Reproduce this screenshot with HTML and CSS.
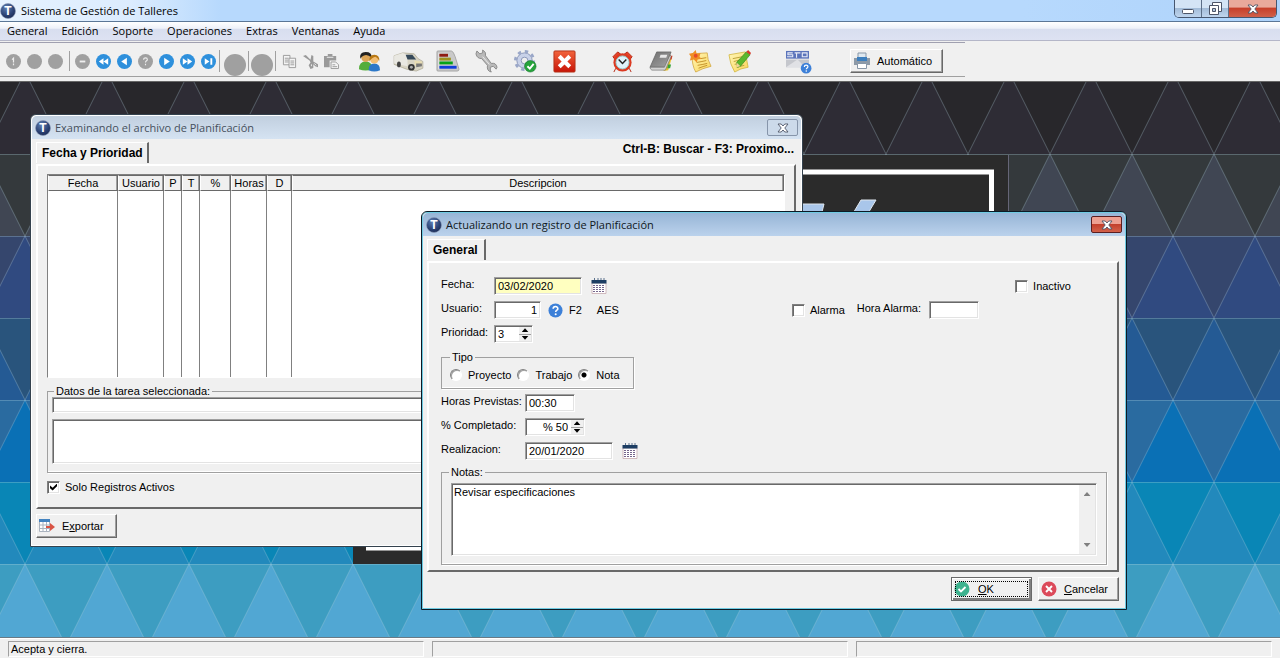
FILE: index.html
```html
<!DOCTYPE html>
<html lang="es">
<head>
<meta charset="utf-8">
<title>Sistema de Gestión de Talleres</title>
<link rel="stylesheet" href="styles.css">
</head>
<body>
<svg class="defs" width="0" height="0" aria-hidden="true">
  <defs>
    <radialGradient id="navy" cx=".4" cy=".3" r=".8"><stop offset="0" stop-color="#5f80b4"/><stop offset=".6" stop-color="#2b4274"/><stop offset="1" stop-color="#18264c"/></radialGradient>
    <linearGradient id="note" x2="1" y2="1"><stop offset="0" stop-color="#fff6b8"/><stop offset="1" stop-color="#fbd558"/></linearGradient>
    <linearGradient id="red" x2="0" y2="1"><stop offset="0" stop-color="#f2643c"/><stop offset="1" stop-color="#c81408"/></linearGradient>
    <linearGradient id="book" x2="1" y2="1"><stop offset="0" stop-color="#6e6e6e"/><stop offset="1" stop-color="#a4a4a4"/></linearGradient>
    <symbol id="logo" viewBox="0 0 16 16"><circle cx="8" cy="8" r="7.5" fill="url(#navy)" stroke="#8d9cb8" stroke-width=".6"/><text x="8" y="12.4" text-anchor="middle" class="logo-letter">T</text></symbol>
    <symbol id="cross" viewBox="0 0 12 10"><path d="M1 1h3.200L6 3l1.800-2H11L7.800 5 11 9H7.800L6 7 4.200 9H1l3.200-4z" fill="#fff" stroke="#4d5568" stroke-width=".9"/></symbol>
    <symbol id="calendar" viewBox="0 0 16 16"><path d="M1 5h14v10.500H1z" fill="#fff" stroke="#c7a9ae" stroke-width=".8"/><path d="M.5 2h15v3.500H.5z" fill="#1d3d63"/><path d="M3.500 0v2M7 0v2M10 0v2M13 0v2" stroke="#5d738e"/><path d="M2 7.500h12M2 9.500h12M2 11.500h12M2 13.500h12" stroke="#75658c" stroke-dasharray="2 1"/></symbol>
    <symbol id="help" viewBox="0 0 16 16"><circle cx="8" cy="8" r="7.500" fill="#3d80d8"/><path d="M5.500 6.200C5.500 3 10.500 3 10.500 6c0 1.700-2.300 1.700-2.300 3.600" fill="none" stroke="#fff" stroke-width="1.700"/><circle cx="8.200" cy="12" r="1.100" fill="#fff"/></symbol>
    <symbol id="nav" viewBox="0 0 16 16"><circle cx="8" cy="8" r="8" fill="#2e90dc"/></symbol>
    <symbol id="off" viewBox="0 0 16 16"><circle cx="8" cy="8" r="8" fill="#a0a0a0"/></symbol>
  </defs>
</svg>

<header class="titlebar">
  <svg class="logo"><use href="#logo"/></svg>
  <h1 class="app-title">Sistema de Gestión de Talleres</h1>
  <div class="caption">
    <button class="cap" aria-label="Minimizar"><svg width="14" height="10"><rect x="1.500" y="5.500" width="11" height="4" rx="1" fill="#fff" stroke="#4d5568"/></svg></button>
    <button class="cap" aria-label="Restaurar"><svg width="13" height="13"><path d="M3.500.500h9v9h-9z" fill="#fff" stroke="#4d5568"/><path d="M.500 3.500h9v9h-9z" fill="#fff" stroke="#4d5568"/><path d="M3.500 6.500h3v3h-3z" fill="#b4c8df" stroke="#4d5568"/></svg></button>
    <button class="cap cap-close" aria-label="Cerrar"><svg width="12" height="10"><use href="#cross"/></svg></button>
  </div>
</header>

<nav class="menubar">
  <button>General</button><button>Edición</button><button>Soporte</button><button>Operaciones</button><button>Extras</button><button>Ventanas</button><button>Ayuda</button>
</nav>

<div class="toolbar">
  <div class="strip">
    <div class="tools small">
      <button aria-label="Insertar" disabled><svg viewBox="0 0 16 16"><use href="#off"/><path d="M6.500 6 8 4.500V9M8 10v2" stroke="#eee" stroke-width="1.300" fill="none"/></svg></button>
      <button aria-label="Cambiar" disabled><svg><use href="#off"/></svg></button>
      <button aria-label="Borrar" disabled><svg><use href="#off"/></svg></button>
    </div>
    <div class="tools small ruled">
      <button aria-label="Desmarcar" disabled><svg viewBox="0 0 16 16"><use href="#off"/><path d="M5 8h6" stroke="#eee" stroke-width="2"/></svg></button>
      <button aria-label="Primero"><svg viewBox="0 0 16 16"><use href="#nav"/><path d="M8 4.500v7L3 8zM13 4.500v7L8 8z" fill="#fff"/></svg></button>
      <button aria-label="Anterior"><svg viewBox="0 0 16 16"><use href="#nav"/><path d="M10.500 4v8L4.500 8z" fill="#fff"/></svg></button>
      <button aria-label="Buscar" disabled><svg viewBox="0 0 16 16"><use href="#off"/><path d="M6 6c0-2.500 4-2.500 4 0 0 1.300-2 1.300-2 3M8 10.500v1.500" fill="none" stroke="#eee" stroke-width="1.200"/></svg></button>
      <button aria-label="Siguiente"><svg viewBox="0 0 16 16"><use href="#nav"/><path d="M5.500 4v8l6-4z" fill="#fff"/></svg></button>
      <button aria-label="Avanzar"><svg viewBox="0 0 16 16"><use href="#nav"/><path d="M3 4.500v7L8 8zM8 4.500v7l5-3.500z" fill="#fff"/></svg></button>
      <button aria-label="Último"><svg viewBox="0 0 16 16"><use href="#nav"/><path d="M4 4.500v7L9 8zM10 4.500h2v7h-2z" fill="#fff"/></svg></button>
    </div>
    <div class="tools big ruled">
      <button aria-label="Aceptar" disabled><svg><use href="#off"/></svg></button>
      <button aria-label="Cancelar" disabled><svg><use href="#off"/></svg></button>
    </div>
    <div class="tools small edit">
      <button aria-label="Copiar"><svg viewBox="0 0 16 16" fill="#f4f4f4" stroke="#9a9a9a"><path d="M1.500 1.500h7v10h-7zM3 4.500h4M3 6.500h4M3 8.500h4"/><path d="M7.500 4.500h7v10h-7zM9 7.500h4M9 9.500h4M9 11.500h4"/></svg></button>
      <button aria-label="Cortar"><svg viewBox="0 0 16 16"><path d="M0 2l3-1 5 5 1-5 2 1v6l5 3v3l-3-1-2-2 0 4-3 1-2-4 2-3-1-2z" fill="#9a9a9a"/><path d="M9 11v2M12 10l2 2" stroke="#f0f0f0"/></svg></button>
      <button aria-label="Pegar"><svg viewBox="0 0 16 16"><path d="M0 2h4V0h5v2h4v5H6v7H0z" fill="#9a9a9a"/><path d="M3 3.500h7" stroke="#f0f0f0"/><path d="M7.500 8.500h5l3 3v4h-8zM9 11.500h3M9 13.500h5" fill="#f4f4f4" stroke="#9a9a9a"/></svg></button>
    </div>
    <div class="tools large">
      <button aria-label="Clientes"><svg viewBox="0 0 24 24"><path d="M1 20q0-8 7-8t7 8q-7 3-14 0" fill="#54ad3b"/><circle cx="8" cy="8" r="4.500" fill="#dca557"/><path d="M2.500 9Q1 2 8 2t6 6Q9 3 4 7z" fill="#222"/><path d="M11 21q0-7 6-7t6 7q-6 3-12 0" fill="#2d78c8"/><circle cx="17" cy="10" r="4.200" fill="#f2bd72"/><path d="M12 12Q11 5 17 5t5 7q-1-4-4-5-4 1-6 5" fill="#b87813"/></svg></button>
      <button aria-label="Vehículos"><svg class="wide" viewBox="0 0 32 24"><path d="M1 6 10 3l12 1 4 5 5 3v7l-7 3-10-2L1 15z" fill="#d8d4c4" stroke="#aaa58f" stroke-width=".7"/><path d="M1 6l9-3 5 2v12L1 14z" fill="#e9e8e2"/><path d="M13 5l7 0 4 5-9 0z" fill="#35495a"/><path d="M22 11l8 1v4l-7 1z" fill="#e8dcb2"/><path d="M24 14h6v3l-6 1z" fill="#777"/><circle cx="19" cy="18" r="3.500" fill="#333"/><circle cx="19" cy="18" r="1.500" fill="#aaa"/><ellipse cx="6" cy="15" rx="2" ry="3" fill="#444"/></svg></button>
      <button aria-label="Planificación"><svg viewBox="0 0 24 24"><path d="M1 2q0-1 1-1h14q2 0 4 6l4 13q0 2-2 2H2q-1 0-1-1z" fill="#c9c9c9" stroke="#999" stroke-width=".8"/><path d="M3 3v17" stroke="#eee"/><path d="M3.500 4h9v3h-9z" fill="#8e1c12"/><path d="M3.500 8h12v3h-12z" fill="#9c921e"/><path d="M3.500 12h14v3h-14z" fill="#07a317"/><path d="M3.500 16.500h18v3h-18z" fill="#113ddb"/></svg></button>
      <button aria-label="Herramientas"><svg viewBox="0 0 24 24"><path d="M2 1l3 3 3-1 0-3q4 2 3 6l6 8q5-1 6 4l-1 2-3-3-3 1v3l1 2q-5-1-4-7L7 9Q2 9 1 4z" fill="#b9b9b9" stroke="#818181" stroke-width=".9"/><path d="M8 7l7 8" stroke="#eee"/></svg></button>
      <button aria-label="Opciones"><svg viewBox="0 0 24 24"><circle cx="11" cy="11" r="8" fill="#c8d1e8" stroke="#8a97b9"/><circle cx="11" cy="11" r="9.500" fill="none" stroke="#9aa7c8" stroke-width="3" stroke-dasharray="3.500 3.960"/><circle cx="11" cy="11" r="3.500" fill="#eee" stroke="#8a97b9"/><circle cx="17" cy="17" r="6" fill="#26a33b" stroke="#12732a" stroke-width=".6"/><path d="M14 17l2.500 2.500 4-5" fill="none" stroke="#fff" stroke-width="2"/></svg></button>
      <button aria-label="Salir"><svg viewBox="0 0 24 24"><rect x="1" y="1" width="22" height="22" rx="1" fill="url(#red)" stroke="#b33118"/><path d="M5 8l3-3 4 4 4-4 3 3-4 4 4 4-3 3-4-4-4 4-3-3 4-4z" fill="#fff"/></svg></button>
    </div>
    <div class="tools large apart">
      <button aria-label="Alarmas"><svg viewBox="0 0 24 24"><path d="M2 7l5-5 4 3-6 6zM22 7l-5-5-4 3 6 6zM5 19l-2 4M19 19l2 4" fill="#e54328" stroke="#b52814"/><circle cx="12" cy="13" r="9.500" fill="#dc3a22"/><circle cx="12" cy="13" r="6.800" fill="#dff2fb" stroke="#9cc"/><path d="M8 10l4 4 4-4" fill="none" stroke="#222" stroke-width="1.500"/></svg></button>
      <button aria-label="Agenda"><svg viewBox="0 0 24 24"><path d="M20 5l3 2-4 14-5 1z" fill="#e8c02c"/><path d="M21 6h2.500l-1 4H20z" fill="#d63a20"/><path d="M19 15h3l-1 4h-3z" fill="#36a43a"/><path d="M7 2h15l-6 16H0z" fill="url(#book)" stroke="#5d5d5d" stroke-width=".7"/><path d="M0 18l15 0 6-13 1 2-6 14H2q-2-1-2-3" fill="#d4d4d4" stroke="#666" stroke-width=".6"/><path d="M11 5h7l-1 3h-7z" fill="#e8e8e8"/></svg></button>
      <button aria-label="Notas"><svg viewBox="0 0 24 24"><path d="M3 4l16-1q0 7 4 14-9 2-16 6Q3 16 3 4" fill="url(#note)" stroke="#d0a43a" stroke-width=".8"/><path d="M8 13q6-1 10-2M9 16q6-1 10-2M10 19q5-2 9-3M12 9l6-1" stroke="#c2912a" fill="none"/><path d="M7 0l1 4 4-1-1 4 2 2-4 1-1 3-3-3-4 1 1-4-2-3 4-1z" fill="#f09026"/><circle cx="7" cy="6" r="2" fill="#e84b28"/></svg></button>
      <button aria-label="Editar nota"><svg viewBox="0 0 24 24"><path d="M1 5l17-3 3 16q-8 1-14 5Q2 15 1 5" fill="url(#note)" stroke="#d0b43a" stroke-width=".8"/><path d="M5 9l10-2M6 12l8-2M7 15l4-1M9 18l8-2" stroke="#b9a13a"/><path d="M10 18l-1-5L19 2l4 3-10 12z" fill="#5cb82c" stroke="#33851a" stroke-width=".7"/><path d="M19 2l2-2 3 3-1 2z" fill="#d8382a"/><path d="M9 13l4 4-4 1z" fill="#f1d29b"/></svg></button>
    </div>
    <div class="tools large apart">
      <button aria-label="Soporte"><svg viewBox="0 0 24 24"><path d="M0 1h24v8H0z" fill="#5a73ba"/><path d="M7 3H2v2h5v2H1M11 3v5M9 3h6M17 3h5v4h-5z" fill="none" stroke="#e6eaf6" stroke-width="1.200"/><path d="M0 10h24v8H0z" fill="#c5c7cd"/><path d="M0 18 12 10l8 8" fill="#e0e1e5"/><svg x="15" y="13" width="10" height="10"><use href="#help"/></svg></svg></button>
    </div>
    <button class="push auto"><svg width="16" height="16" viewBox="0 0 16 16"><path d="M4 0h8v5H4z" fill="#dfe8f0" stroke="#8897a8"/><path d="M0 5h16v7H0z" fill="#8d9aa8"/><path d="M3 4h10v4H3z" fill="#3d7fbe"/><path d="M3.500 10.500h9v5h-9z" fill="#fff" stroke="#8897a8"/></svg>Automático</button>
  </div>
</div>

<main class="desktop">
  <svg class="wallpaper" aria-hidden="true">
    <defs>
      <pattern id="tiles" x="-16" y="-10" width="82" height="656" patternUnits="userSpaceOnUse">
        <path fill="#28272b" d="M0 0h82v82H0z"/><path fill="#2e2c35" d="M41 0l41 82H0z"/>
        <path fill="#34393c" d="M0 82h82v82H0z"/><path fill="#404653" d="M0 82l41 82H0zM82 82v82H41z"/>
        <path fill="#35466d" d="M0 164h82v82H0z"/><path fill="#304a80" d="M41 164l41 82H0z"/>
        <path fill="#29547c" d="M0 246h82v82H0z"/><path fill="#245a94" d="M0 246l41 82H0zM82 246v82H41z"/>
        <path fill="#2a6ba0" d="M0 328h82v82H0z"/><path fill="#0a70b5" d="M41 328l41 82H0z"/>
        <path fill="#0986b6" d="M0 410h82v82H0z"/><path fill="#2289bc" d="M0 410l41 82H0zM82 410v82H41z"/>
        <path fill="#3d9dc1" d="M0 492h82v82H0z"/><path fill="#51a7d3" d="M41 492l41 82H0z"/>
        <path fill="#3d9dc1" d="M0 574h82v82H0z"/>
        <path fill="none" stroke="#b4d4e4" stroke-opacity=".3" d="M41 0 0 82l41 82-41 82 41 82-41 82 41 82-41 82M41 0l41 82-41 82 41 82-41 82 41 82-41 82 41 82M0 82.500h82M0 164.500h82M0 246.500h82M0 328.500h82M0 410.500h82M0 492.500h82"/>
      </pattern>
    </defs>
    <rect width="100%" height="100%" fill="url(#tiles)"/>
    <path fill="#2b2b2b" d="M353 73h655v409H353z"/>
    <path fill="none" stroke="#667" d="M1008.500 73v409"/>
    <path fill="none" stroke="#fff" stroke-width="5" d="M368.500 90h623v376h-623z"/>
    <path fill="#a9c6ea" stroke="#dfe6ee" d="M790 122h34l-4 16h-30zM861 118h15l-12 20h-15z"/>
  </svg>

  <section class="window browse" aria-label="Examinando el archivo de Planificación">
    <header class="win-title">
      <svg class="logo"><use href="#logo"/></svg>
      <h2>Examinando el archivo de Planificación</h2>
      <button class="win-close" aria-label="Cerrar"><svg width="12" height="10"><use href="#cross"/></svg></button>
    </header>
    <div class="tabs"><button class="tab">Fecha y Prioridad</button><p class="hint">Ctrl-B: Buscar - F3: Proximo...</p></div>
    <div class="panel">
      <div class="list">
        <table>
          <colgroup><col class="c-date"><col class="c-user"><col class="c-flag"><col class="c-flag"><col class="c-pct"><col class="c-hours"><col class="c-d"><col></colgroup>
          <thead><tr><th>Fecha</th><th>Usuario</th><th>P</th><th>T</th><th>%</th><th>Horas</th><th>D</th><th>Descripcion</th></tr></thead>
          <tbody><tr><td></td><td></td><td></td><td></td><td></td><td></td><td></td><td></td></tr></tbody>
        </table>
      </div>
      <fieldset class="group data">
        <legend>Datos de la tarea seleccionada:</legend>
        <input class="field task" type="text" aria-label="Tarea">
        <textarea class="field detail" aria-label="Detalle"></textarea>
      </fieldset>
      <label class="check"><input type="checkbox" checked>Solo Registros Activos</label>
    </div>
    <footer class="actions left">
      <button class="push"><svg width="16" height="16" viewBox="0 0 16 16"><path d="M.500 3.500h10v10H.500z" fill="#fff" stroke="#aab3bf"/><path d="M4 4v10M7.500 4v10M0 7h11M0 10.500h11" stroke="#aab3bf"/><path d="M0 1h11v3H0z" fill="#4383c0"/><path d="M7 8h4V5l5 4-5 4v-3H7z" fill="#d95445"/></svg><span>E<u>x</u>portar</span></button>
    </footer>
  </section>

  <section class="window dialog" aria-label="Actualizando un registro de Planificación">
    <header class="win-title">
      <svg class="logo"><use href="#logo"/></svg>
      <h2>Actualizando un registro de Planificación</h2>
      <button class="win-close" aria-label="Cerrar"><svg width="12" height="10"><use href="#cross"/></svg></button>
    </header>
    <div class="tabs"><button class="tab">General</button></div>
    <form class="panel">
      <div class="row">
        <label class="short" for="fecha">Fecha:</label>
        <input class="field date active" id="fecha" type="text" value="03/02/2020">
        <button type="button" class="icon" aria-label="Calendario"><svg width="16" height="16"><use href="#calendar"/></svg></button>
        <label class="check inactive"><input type="checkbox">Inactivo</label>
      </div>
      <div class="row">
        <label class="short" for="usuario">Usuario:</label>
        <input class="field user" id="usuario" type="text" value="1">
        <button type="button" class="icon help"><svg width="15" height="15"><use href="#help"/></svg>F2</button>
        <output for="usuario">AES</output>
        <div class="alarm">
          <label class="check"><input type="checkbox">Alarma</label>
          <label class="hour" for="hora">Hora Alarma:</label>
          <input class="field time" id="hora" type="text">
        </div>
      </div>
      <div class="row">
        <label class="short" for="prioridad">Prioridad:</label>
        <div class="field spin"><input id="prioridad" type="text" value="3"><span class="arrows"><button type="button" aria-label="Subir prioridad"></button><button type="button" aria-label="Bajar prioridad"></button></span></div>
      </div>
      <fieldset class="group type">
        <legend>Tipo</legend>
        <label><input type="radio" name="tipo">Proyecto</label>
        <label><input type="radio" name="tipo">Trabajo</label>
        <label><input type="radio" name="tipo" checked>Nota</label>
      </fieldset>
      <div class="row">
        <label class="long" for="horas">Horas Previstas:</label>
        <input class="field time" id="horas" type="text" value="00:30">
      </div>
      <div class="row">
        <label class="long" for="completado">% Completado:</label>
        <div class="field spin percent"><input id="completado" type="text" value="% 50"><span class="arrows"><button type="button" aria-label="Subir porcentaje"></button><button type="button" aria-label="Bajar porcentaje"></button></span></div>
      </div>
      <div class="row">
        <label class="long" for="realizacion">Realizacion:</label>
        <input class="field date" id="realizacion" type="text" value="20/01/2020">
        <button type="button" class="icon" aria-label="Calendario"><svg width="16" height="16"><use href="#calendar"/></svg></button>
      </div>
      <fieldset class="group notes">
        <legend>Notas:</legend>
        <div class="field memo">
          <textarea aria-label="Notas">Revisar especificaciones</textarea>
          <span class="scroll"><button type="button" aria-label="Subir"></button><button type="button" aria-label="Bajar"></button></span>
        </div>
      </fieldset>
    </form>
    <footer class="actions">
      <button class="push default"><svg width="16" height="16" viewBox="0 0 16 16"><circle cx="8" cy="8" r="7.500" fill="#3db28e"/><path d="M4.500 8l2.500 2.500 4.500-4.500" fill="none" stroke="#fff" stroke-width="1.800"/></svg><span><u>O</u>K</span></button>
      <button class="push"><svg width="16" height="16" viewBox="0 0 16 16"><circle cx="8" cy="8" r="7.500" fill="#dc4a5a"/><path d="M5 5l6 6M11 5l-6 6" stroke="#fff" stroke-width="1.900"/></svg><span><u>C</u>ancelar</span></button>
    </footer>
  </section>
</main>

<footer class="status"><p>Acepta y cierra.</p><p></p><p></p></footer>
</body>
</html>
```
FILE: styles.css
```css
* { box-sizing: border-box; }
body {
  margin: 0;
  min-height: 100vh;
  display: flex;
  flex-direction: column;
  background: #f0f0f0;
  color: #000;
  font: 11px/14px "Liberation Sans", Arial, sans-serif;
}
button, input, textarea { font: inherit; color: inherit; margin: 0; padding: 0; border: 0; background: none; border-radius: 0; outline: 0; }
svg { display: block; flex: none; overflow: visible; }
h1, h2, p { margin: 0; font: inherit; }
.defs { position: absolute; }
.logo { width: 16px; height: 16px; }
.logo-letter { font: bold 12px "Liberation Sans", sans-serif; fill: #fff; }

/* Main frame */
.titlebar {
  display: flex;
  align-items: center;
  height: 22px;
  border-bottom: 1px solid #5b7696;
  background: linear-gradient(90deg, #e6f2fe 0, #dcecfe 130px, #b7d9fd 220px, #b7d9fd 80%, #aed3fb);
}
.app-title { flex: 1; padding-left: 5px; font: 11px/20px "Open Sans", "Noto Sans", sans-serif; }
.caption { display: flex; align-self: flex-start; margin-right: 3px; border: 1px solid #46566f; border-top: 0; border-radius: 0 0 5px 5px; overflow: hidden; }
.cap { display: grid; place-items: center; width: 27px; height: 17px; border-right: 1px solid #5c6f88; background: linear-gradient(#d4e4f5 45%, #a3bcd8 50%, #bfd5ee); }
.cap-close { width: 47px; border: 0; background: linear-gradient(#e9a99b 40%, #c7402b 50%, #d0604a); }
.menubar { display: flex; height: 19px; border-bottom: 1px solid #b4b6c8; background: linear-gradient(#fff, #eef1f9 35%, #d8deef 40%, #dde2f2); }
.menubar button { padding: 0 7px; font: 11px/18px "Open Sans", "Noto Sans", sans-serif; }

/* Toolbar */
.toolbar { height: 41px; border-bottom: 1px solid #666; }
.strip { display: flex; align-items: center; width: fit-content; height: 35px; margin-top: 1px; padding: 3px 22px 0 3px; border-top: 1px solid #a0a0b0; border-bottom: 1px solid #a0a0a0; }
.tools { display: flex; align-items: center; }
.tools button { display: grid; place-items: center; }
.small button { width: 21px; }
.small svg { width: 15px; height: 15px; }
.ruled { height: 22px; margin-left: 3px; padding-left: 2px; border-left: 1px solid #a0a0a0; }
.small.ruled { height: 20px; }
.big { margin-left: 0; }
.big button { width: 27px; height: 20px; border-right: 1px solid #a0a0a0; }
.big svg { width: 22px; height: 22px; margin-top: 3px; }
.edit { margin-left: 3px; }
.large { margin-left: 8px; }
.large button { width: 39px; }
.large svg { width: 23px; height: 23px; }
.large svg svg { width: 12px; height: 12px; }
.large svg.wide { width: 31px; }
.apart { margin-left: 19px; }
.push {
  display: flex;
  align-items: center;
  gap: 7px;
  min-width: 81px;
  height: 24px;
  padding: 0 8px 0 2px;
  border: 1px solid;
  border-color: #fff #696969 #696969 #fff;
  background: #f0f0f0;
  box-shadow: inset -1px -1px #a0a0a0;
}
.push.auto { margin-left: 33px; padding: 0 10px 0 3px; }

/* Desktop and windows */
.desktop { position: relative; flex: 1; overflow: hidden; }
.wallpaper { position: absolute; width: 100%; height: 100%; }
.window {
  position: absolute;
  display: flex;
  flex-direction: column;
  padding: 0 6px 8px 5px;
  border: 1px solid #34424e;
  border-radius: 6px 6px 0 0;
  background: #f0f0f0;
  box-shadow: inset 0 0 0 1px #fff;
}
.browse { left: 30px; top: 32px; width: 773px; }
.dialog { left: 421px; top: 129px; width: 706px; padding-right: 7px; border-color: #0b1a26; box-shadow: inset 0 0 0 1px #6fcbe2; }
.win-title { display: flex; align-items: center; height: 23px; margin: 1px -5px 0 -4px; padding: 0 3px 0 3px; background: linear-gradient(#c1cfdf, #d5e3f2); color: #46505c; border-radius: 5px 5px 0 0; }
.win-title h2 { flex: 1; padding-left: 4px; font: 11px/20px "Open Sans", "Noto Sans", sans-serif; }
.win-close { display: grid; place-items: center; width: 31px; height: 17px; border: 1px solid #8695aa; border-radius: 2px; background: #ccdaea; }
.dialog .win-title { margin-right: -6px; background: linear-gradient(#97b5d6, #bbd2ec); color: #101820; }
.dialog .win-close { border-color: #5b1e20; background: linear-gradient(#eda092 45%, #c2402d 50%, #d3614a); }
.tabs { display: flex; justify-content: space-between; height: 23px; margin-top: 3px; }
.tab { height: 21px; padding: 0 6px 0 5px; border-top: 1px solid #fff; border-left: 1px solid #fff; border-right: 2px solid #696969; font-size: 12px; font-weight: bold; }
.browse .tab { padding-right: 4px; }
.hint { padding: 0 2px; font-size: 12px; font-weight: bold; }
.panel { margin-top: -1px; border: 2px solid; border-color: #fff #696969 #696969 #fff; }
.browse .panel { padding: 8px 9px 13px; }
.dialog .panel { padding: 14px 10px 5px 12px; }
.actions { display: flex; justify-content: flex-end; gap: 6px; padding-top: 5px; }
.actions.left { justify-content: flex-start; }
.push.default { gap: 8px; border-color: #696969; box-shadow: inset 1px 1px #fff, inset -2px -2px #808080; outline: 1px dotted #000; outline-offset: -5px; }

/* Fields */
.field {
  display: block;
  height: 18px;
  padding: 1px 3px;
  border: 1px solid;
  border-color: #a0a0a0 #fff #fff #a0a0a0;
  background: #fff;
  box-shadow: inset 1px 1px #696969, inset -1px -1px #e3e3e3;
}
.field.active { background: #ffffc0; }
.group { min-width: 0; margin: 0; padding: 0; border: 1px solid #a0a0a0; box-shadow: 1px 1px #fff, inset 0 -1px #fff; }
.group legend { padding: 0 2px; line-height: 12px; }
.check { display: flex; align-items: center; gap: 5px; }
.check input { appearance: none; display: grid; place-items: center; width: 13px; height: 13px; border: 1px solid; border-color: #808080 #fff #fff #808080; background: #fff; box-shadow: inset 1px 1px #696969, inset -1px -1px #e3e3e3; }
.check input:checked::after { content: ""; width: 7px; height: 7px; background: #000; clip-path: polygon(0 30%, 38% 62%, 100% 0, 100% 38%, 38% 100%, 0 68%); }

/* Browse window */
.list { height: 204px; border: 1px solid; border-color: #808080 #fff #fff #808080; background: #fff; }
.list table { width: 100%; height: 100%; table-layout: fixed; border-collapse: separate; border-spacing: 0; }
.list th { height: 16px; padding: 0; border: 1px solid; border-color: #696969 #696969 #696969 #fff; background: #f0f0f0; font-weight: normal; line-height: 14px; white-space: nowrap; box-shadow: inset -1px 0 #a0a0a0; }
.list td { border-right: 1px solid #808080; }
.list td:last-child { border: 0; }
.c-date { width: 70px; }
.c-user { width: 46px; }
.c-flag { width: 18px; }
.c-pct { width: 31px; }
.c-hours { width: 36px; }
.c-d { width: 25px; }
.data { margin-top: 7px; padding: 0 4px 8px; }
.data legend { margin-left: 2px; }
.task { width: 100%; height: 16px; }
.detail { width: 100%; height: 45px; margin-top: 6px; resize: none; }
.browse .check { margin-top: 7px; }

/* Record dialog */
.row { display: flex; align-items: center; height: 18px; margin-bottom: 6px; }
.row > label:first-child { align-self: flex-start; }
.short { width: 53px; }
.long { width: 84px; }
.date { width: 88px; }
.user { width: 47px; text-align: right; }
.time { width: 50px; }
.icon { display: flex; align-items: center; gap: 6px; margin-left: 9px; }
.icon.help { margin-left: 7px; }
.row output { margin-left: 15px; }
.inactive { margin-left: auto; margin-right: 36px; }
.alarm { display: flex; align-items: center; margin-left: auto; margin-right: 128px; }
.hour { margin: 0 8px 0 12px; align-self: flex-start; }
.spin { display: flex; width: 39px; padding: 1px; }
.spin input { flex: 1; width: 0; padding-left: 2px; }
.percent { width: 60px; }
.percent input { text-align: right; padding-right: 3px; }
.arrows { display: flex; flex-direction: column; width: 12px; background: #f0f0f0; }
.arrows button, .scroll button { flex: 1; display: grid; place-items: center; }
.arrows button:first-child { border-bottom: 1px solid #a0a0a0; }
.arrows button::before, .scroll button::before { content: ""; width: 7px; height: 4px; background: #000; clip-path: polygon(50% 0, 100% 100%, 0 100%); }
.arrows button:last-child::before, .scroll button:last-child::before { clip-path: polygon(0 0, 100% 0, 50% 100%); }
.type { display: flex; align-items: center; gap: 6px; width: 193px; height: 38px; margin: 8px 0 5px; padding: 0 8px 2px; }
.type legend, .notes legend { margin-left: 6px; }
.type legend { margin-left: 0; }
.notes legend { margin-left: -2px; }
.type label { display: flex; align-items: center; gap: 6px; }
.type input { appearance: none; width: 12px; height: 12px; border: 1px solid; border-color: #808080 #fff #fff #808080; border-radius: 50%; background: #fff; box-shadow: inset 1px 1px #a0a0a0; }
.type input:checked { background: radial-gradient(circle, #000 2px, #fff 3px); }
.notes { padding: 5px 9px 8px; }
.memo { display: flex; width: 100%; height: 73px; padding: 1px; }
.memo textarea { flex: 1; padding: 0 1px; resize: none; }
.scroll { display: flex; flex-direction: column; justify-content: space-between; width: 16px; background: #f0f0f0; }
.scroll button { flex: none; height: 18px; }
.scroll button::before { background: #808080; }

/* Status bar */
.status { display: grid; grid-template-columns: 1fr 1fr 1fr; gap: 8px; height: 21px; padding: 3px 8px 2px; border-top: 1px solid #697a85; box-shadow: inset 0 1px #fff; }
.status p { border: 1px solid; border-color: #a0a0a0 #fff #fff #a0a0a0; padding-left: 2px; }
```
